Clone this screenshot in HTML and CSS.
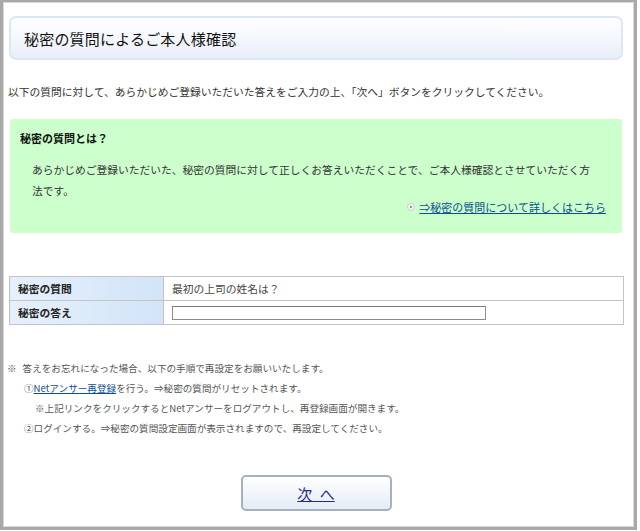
FILE: index.html
```html
<!DOCTYPE html>
<html lang="ja">
<head>
<meta charset="utf-8">
<title>秘密の質問によるご本人様確認</title>
<link rel="stylesheet" href="styles.css">
</head>
<body>
<div class="frame">
  <div class="title-box"><h1>秘密の質問によるご本人様確認</h1></div>
  <p class="intro">以下の質問に対して、あらかじめご登録いただいた答えをご入力の上、「次へ」ボタンをクリックしてください。</p>
  <div class="info">
    <h2>秘密の質問とは？</h2>
    <p class="info-text">あらかじめご登録いただいた、秘密の質問に対して正しくお答えいただくことで、ご本人様確認とさせていただく方法です。</p>
    <div class="info-link">
      <svg class="bullet" width="8" height="8" viewBox="0 0 8 8"><circle cx="4" cy="4" r="3.6" fill="#f4f4f4" stroke="#c8c8c8" stroke-width="0.8"/><path d="M3.2 2.4 L5.4 4 L3.2 5.6 Z" fill="#777"/></svg>
      <a href="#">⇒秘密の質問について詳しくはこちら</a>
    </div>
  </div>
  <table class="qa">
    <tr><th>秘密の質問</th><td>最初の上司の姓名は？</td></tr>
    <tr><th>秘密の答え</th><td><input type="text" class="answer"></td></tr>
  </table>
  <div class="notes">
    <p class="n1"><span class="mark">※</span>答えをお忘れになった場合、以下の手順で再設定をお願いいたします。</p>
    <p class="n2">①<a href="#">Netアンサー再登録</a>を行う。⇒秘密の質問がリセットされます。</p>
    <p class="n3">※上記リンクをクリックするとNetアンサーをログアウトし、再登録画面が開きます。</p>
    <p class="n2">②ログインする。⇒秘密の質問設定画面が表示されますので、再設定してください。</p>
  </div>
  <div class="actions"><a href="#" class="next">次 へ</a></div>
</div>
</body>
</html>
```
FILE: styles.css
```css
html, body { margin: 0; padding: 0; background: #fff; }
body {
  font-family: "Noto Sans CJK JP", "Noto Sans", sans-serif;
  color: #333;
  width: 640px;
  height: 531px;
  overflow: hidden;
}
.frame {
  box-sizing: border-box;
  width: 637px;
  height: 530px;
  border-style: solid;
  border-color: #a8a8a8;
  border-width: 2px 3px 3px 3px;
  box-shadow: inset 1px 1px 0 #d8d8d8, inset -1px -1px 0 #d8d8d8;
  padding: 14px 11px 0 6px;
}
.title-box {
  box-sizing: border-box;
  height: 44px;
  border: 2px solid #dbe7f7;
  border-radius: 7px;
  background: linear-gradient(#ffffff, #e9eff8);
  display: flex;
  align-items: center;
  padding-left: 13px;
}
.title-box h1 {
  margin: 0;
  font-size: 15px;
  font-weight: normal;
  color: #111;
  letter-spacing: 0.2px;
}
.intro {
  margin: 24px 0 0 -1px;
  font-size: 10.75px;
  line-height: 16px;
  color: #333;
}
.info {
  margin: 19px 1px 0 1px;
  background: #ccffcc;
  border-radius: 3px;
  height: 114px;
  box-sizing: border-box;
  padding: 10px 16px 0 10px;
}
.info h2 {
  margin: 0;
  font-size: 11px;
  font-weight: bold;
  color: #111;
  line-height: 18px;
}
.info-text {
  margin: 12px 12px 0 12px;
  font-size: 10.75px;
  line-height: 21px;
  color: #333;
}
.info-link {
  display: flex;
  justify-content: flex-end;
  align-items: center;
  gap: 4px;
  margin-top: -3px;
  font-size: 11px;
  line-height: 18px;
}
.info-link a { color: #0a4f8f; }
.bullet { display: block; }
.qa {
  margin-top: 43px;
  width: 615px;
  border-collapse: collapse;
  font-size: 10.75px;
}
.qa th, .qa td {
  border: 1px solid #c4c4c4;
  height: 24px;
  padding: 0 0 0 8px;
  box-sizing: border-box;
  text-align: left;
}
.qa th {
  width: 154px;
  font-weight: bold;
  color: #222;
  background: linear-gradient(90deg, #e6f0fb, #d2e4f8);
}
.qa td { color: #444; }
.answer {
  display: block;
  box-sizing: border-box;
  width: 314px;
  height: 14px;
  margin: 0;
  border: 1px solid #8c8c8c;
  border-top-color: #7a7a7a;
  padding: 0;
}
.notes {
  margin-top: 33px;
  margin-left: -2px;
  font-size: 9.6px;
  color: #555;
}
.notes p { margin: 0; line-height: 20px; }
.notes a { color: #0a4f8f; }
.mark { margin-right: 6px; }
.n2 { padding-left: 17px; }
.n3 { padding-left: 28px; }
.actions {
  display: flex;
  justify-content: center;
  margin-top: 37px;
}
.next {
  box-sizing: border-box;
  width: 151px;
  height: 36px;
  border: 2px solid #a7b1bd;
  border-radius: 5px;
  background: linear-gradient(#ffffff, #e4ecf6);
  display: flex;
  align-items: center;
  justify-content: center;
  color: #1c2a8f;
  font-size: 15px;
  word-spacing: 4px;
  text-decoration: underline;
}
```
